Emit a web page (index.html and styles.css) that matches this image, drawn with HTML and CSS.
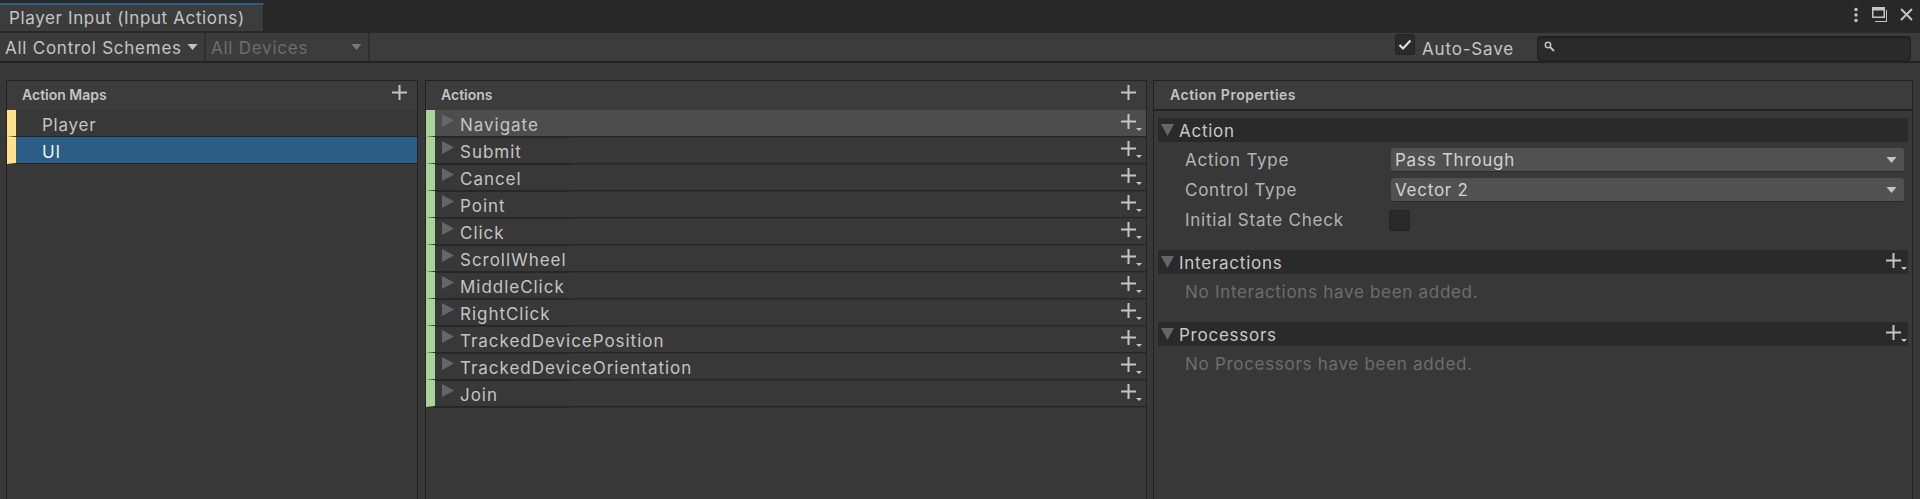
FILE: index.html
```html
<!DOCTYPE html>
<html lang="en">
<head>
<meta charset="utf-8">
<title>Player Input (Input Actions)</title>
<link rel="stylesheet" href="styles.css">
</head>
<body>
<svg class="defs" width="0" height="0">
  <symbol id="plus" viewBox="0 0 15 15"><path d="M6.5 0h2v6.5H15v2H8.500V15h-2V8.500H0v-2h6.500z" fill="#c4c4c4"/></symbol>
  <symbol id="plusmore" viewBox="0 0 22 20"><path d="M6.500 1h2v6.500H15v2H8.500V16h-2V9.500H0v-2h6.500z" fill="#c4c4c4"/><path d="M15 15h6l-3 3z" fill="#c4c4c4"/></symbol>
  <symbol id="right" viewBox="0 0 12 13"><path d="M0 0l12 6.500L0 13z" fill="#666"/></symbol>
  <symbol id="down" viewBox="0 0 13 12"><path d="M0 0h13L6.500 12z" fill="#666"/></symbol>
  <symbol id="drop" viewBox="0 0 10 6"><path d="M0 0h10L5 6z" fill="#c4c4c4"/></symbol>
</svg>
<div class="app">
  <div class="tabbar">
    <div class="tab">Player Input (Input Actions)</div>
    <div class="winbtns">
      <svg width="6" height="16" viewBox="0 0 6 16"><circle cx="3" cy="2.500" r="1.700" fill="#c4c4c4"/><circle cx="3" cy="8" r="1.700" fill="#c4c4c4"/><circle cx="3" cy="13.500" r="1.700" fill="#c4c4c4"/></svg>
      <svg width="15" height="15" viewBox="0 0 15 15"><path d="M0 0h13v11H0zM1.500 3.500v6h10v-6z" fill="#c4c4c4"/><path d="M14 3h1v12H3v-1h11z" fill="#c4c4c4"/></svg>
      <svg width="13" height="13" viewBox="0 0 13 13"><path d="M1 1l11 11M12 1L1 12" stroke="#c4c4c4" stroke-width="2"/></svg>
    </div>
  </div>
  <div class="toolbar">
    <div class="tb-drop tb-schemes"><span class="tb-label">All Control Schemes</span><svg class="tb-arrow" width="11" height="6"><use href="#drop"/></svg></div>
    <div class="tb-drop tb-devices"><span class="tb-label">All Devices</span><svg class="tb-arrow tb-arrow-dim" width="11" height="6"><use href="#drop"/></svg></div>
    <div class="autosave">
      <span class="check"><svg width="14" height="12" viewBox="0 0 14 12"><path d="M1.500 6l3.500 3.500L12.500 1.500" fill="none" stroke="#e0e0e0" stroke-width="2.200"/></svg></span>
      <span class="autosave-label">Auto-Save</span>
    </div>
    <div class="search"><svg width="11" height="11" viewBox="0 0 11 11"><circle cx="4" cy="4" r="2.700" fill="none" stroke="#c4c4c4" stroke-width="1.500"/><path d="M6 6l4 4" stroke="#c4c4c4" stroke-width="1.800"/></svg></div>
  </div>
  <div class="panels">
    <section class="panel maps">
      <header class="phead">Action Maps<svg class="padd" width="15" height="15"><use href="#plus"/></svg></header>
      <div class="maprow">Player</div>
      <div class="maprow selected">UI</div>
    </section>
    <section class="panel actions">
      <header class="phead phead-plain">Actions<svg class="padd" width="15" height="15"><use href="#plus"/></svg></header>
      <div class="actrow hover"><svg class="fold" width="12" height="13"><use href="#right"/></svg><span class="actname">Navigate</span><svg class="more" width="22" height="20"><use href="#plusmore"/></svg></div>
      <div class="actrow"><svg class="fold" width="12" height="13"><use href="#right"/></svg><span class="actname">Submit</span><svg class="more" width="22" height="20"><use href="#plusmore"/></svg></div>
      <div class="actrow"><svg class="fold" width="12" height="13"><use href="#right"/></svg><span class="actname">Cancel</span><svg class="more" width="22" height="20"><use href="#plusmore"/></svg></div>
      <div class="actrow"><svg class="fold" width="12" height="13"><use href="#right"/></svg><span class="actname">Point</span><svg class="more" width="22" height="20"><use href="#plusmore"/></svg></div>
      <div class="actrow"><svg class="fold" width="12" height="13"><use href="#right"/></svg><span class="actname">Click</span><svg class="more" width="22" height="20"><use href="#plusmore"/></svg></div>
      <div class="actrow"><svg class="fold" width="12" height="13"><use href="#right"/></svg><span class="actname">ScrollWheel</span><svg class="more" width="22" height="20"><use href="#plusmore"/></svg></div>
      <div class="actrow"><svg class="fold" width="12" height="13"><use href="#right"/></svg><span class="actname">MiddleClick</span><svg class="more" width="22" height="20"><use href="#plusmore"/></svg></div>
      <div class="actrow"><svg class="fold" width="12" height="13"><use href="#right"/></svg><span class="actname">RightClick</span><svg class="more" width="22" height="20"><use href="#plusmore"/></svg></div>
      <div class="actrow"><svg class="fold" width="12" height="13"><use href="#right"/></svg><span class="actname">TrackedDevicePosition</span><svg class="more" width="22" height="20"><use href="#plusmore"/></svg></div>
      <div class="actrow"><svg class="fold" width="12" height="13"><use href="#right"/></svg><span class="actname">TrackedDeviceOrientation</span><svg class="more" width="22" height="20"><use href="#plusmore"/></svg></div>
      <div class="actrow"><svg class="fold" width="12" height="13"><use href="#right"/></svg><span class="actname">Join</span><svg class="more" width="22" height="20"><use href="#plusmore"/></svg></div>
    </section>
    <section class="panel props">
      <header class="phead phead-line">Action Properties</header>
      <div class="section-head first"><svg class="foldd" width="13" height="12"><use href="#down"/></svg><span class="sec-title">Action</span></div>
      <div class="field"><span class="flabel">Action Type</span><div class="select"><span class="sel-value">Pass Through</span><svg width="11" height="6"><use href="#drop"/></svg></div></div>
      <div class="field"><span class="flabel">Control Type</span><div class="select"><span class="sel-value">Vector 2</span><svg width="11" height="6"><use href="#drop"/></svg></div></div>
      <div class="field"><span class="flabel">Initial State Check</span><span class="box"></span></div>
      <div class="section-head sec-gap"><svg class="foldd" width="13" height="12"><use href="#down"/></svg><span class="sec-title">Interactions</span><svg class="more" width="22" height="20"><use href="#plusmore"/></svg></div>
      <div class="empty">No Interactions have been added.</div>
      <div class="section-head sec-gap"><svg class="foldd" width="13" height="12"><use href="#down"/></svg><span class="sec-title">Processors</span><svg class="more" width="22" height="20"><use href="#plusmore"/></svg></div>
      <div class="empty">No Processors have been added.</div>
    </section>
  </div>
</div>
</body>
</html>
```
FILE: styles.css
```css
* { box-sizing: border-box; }
html, body { margin: 0; padding: 0; height: 100%; overflow: hidden; }
body {
  background: #383838;
  color: #c4c4c4;
  font-family: Inter, "Liberation Sans", sans-serif;
  font-size: 17px;
  font-weight: 400;
  letter-spacing: 0.75px;
}
.defs { position: absolute; }
.app { display: flex; flex-direction: column; height: 499px; }

.tabbar {
  height: 32px;
  background: #282828;
  padding-top: 3px;
  display: flex;
  justify-content: space-between;
  flex: none;
}
.tab {
  width: 264px;
  height: 28px;
  background: #3c3c3c;
  border-top: 2px solid #2c5d87;
  padding: 2px 0 0 9px;
  line-height: 22px;
  letter-spacing: 0.63px;
  border-right: 1px solid #232323;
}
.winbtns {
  display: flex;
  align-items: center;
  gap: 13px;
  padding: 0 7px 6px 0;
}

.toolbar {
  height: 31px;
  background: #3c3c3c;
  border-top: 1px solid #2a2a2a;
  border-bottom: 2px solid #232323;
  display: flex;
  align-items: stretch;
  flex: none;
}
.tb-drop {
  display: flex;
  align-items: center;
  justify-content: space-between;
  padding-left: 5px;
  border-right: 2px solid #2f2f2f;
  line-height: 28px;
}
.tb-label { padding-top: 2px; }
.tb-schemes { width: 206px; padding-right: 6px; }
.tb-devices { width: 164px; color: #6d6d6d; padding-right: 6px; }
.tb-arrow-dim { opacity: 0.45; }
.autosave {
  margin-left: auto;
  display: flex;
  align-items: center;
  gap: 7px;
  width: 142px;
  letter-spacing: 0.83px;
}
.autosave-label { padding-top: 3px; }
.check {
  width: 20px;
  height: 21px;
  margin-top: -5px;
  background: #2a2a2a;
  border: 1px solid #232323;
  border-radius: 3px;
  display: flex;
  align-items: center;
  justify-content: center;
}
.search {
  width: 374px;
  height: 25px;
  margin: 3px 9px 0 0;
  background: #2a2a2a;
  border: 1px solid #212121;
  border-top: 2px solid #1e1e1e;
  border-radius: 4px;
  padding: 3px 0 0 6px;
  display: flex;
  align-items: flex-start;
}

.panels {
  flex: 1;
  display: flex;
  padding: 17px 7px 0 6px;
  align-items: stretch;
}
.panel {
  border: 1px solid #232323;
  border-bottom: none;
  background: #383838;
  display: flex;
  flex-direction: column;
}
.maps { width: 412px; }
.actions { width: 722px; margin-left: 7px; }
.props { width: 760px; margin-left: 6px; }

.phead {
  height: 29px;
  background: #3c3c3c;
  flex: none;
  padding: 0 0 2px 15px;
  display: flex;
  align-items: center;
  justify-content: space-between;
  font-size: 14px;
  font-weight: 600;
  letter-spacing: 0;
  color: #c4c4c4;
}
.padd { margin: -4px 10px 0 0; }
.phead-line { height: 30px; border-bottom: 2px solid #232323; letter-spacing: 0.5px; padding-left: 16px; }

.maprow {
  height: 27px;
  flex: none;
  border-left: 9px solid #ffe28a;
  border-bottom: 1px solid #232323;
  padding: 2px 0 0 26px;
  line-height: 26px;
}
.maprow.selected { background: #2c5d87; color: #f0f0f0; }

.actrow {
  position: relative;
  height: 27px;
  flex: none;
  border-left: 9px solid #a8d49a;
  border-bottom: 1px solid #262626;
  box-shadow: 0 1px 0 #313131;
  padding-left: 7px;
  display: flex;
  align-items: center;
  line-height: 26px;
  letter-spacing: 0.97px;
}
.actname { padding-top: 3px; }
.actrow::after {
  content: "";
  position: absolute;
  left: 0;
  bottom: -2px;
  width: 135px;
  height: 2px;
  background: #272727;
}
.actrow.hover { background: #4d4d4d; }
.fold { margin: -5px 6px 0 0; flex: none; }
.actrow .more, .section-head .more {
  margin-left: auto;
  margin-top: 0;
  flex: none;
}
.actrow .more { margin-right: 3px; }

.section-head {
  height: 24px;
  margin: 0 4px;
  background: #2a2a2a;
  color: #c8c8c8;
  display: flex;
  align-items: center;
  flex: none;
  padding-left: 3px;
  letter-spacing: 0.75px;
}
.sec-title { padding-top: 1px; }
.section-head .more { margin-right: 0; }
.foldd { margin-right: 5px; flex: none; }
.section-head.first { margin-top: 7px; }
.sec-gap { margin-top: 18px; }

.field {
  display: flex;
  align-items: center;
  height: 24px;
  margin-top: 6px;
  padding-left: 31px;
  flex: none;
}
.flabel { width: 206px; flex: none; color: #b4b4b4; }
.select {
  width: 513px;
  height: 24px;
  background: #515151;
  border-radius: 3px;
  border-bottom: 1px solid #2a2a2a;
  color: #d2d2d2;
  padding: 0 7px 0 4px;
  display: flex;
  align-items: center;
  justify-content: space-between;
}
.box {
  width: 21px;
  height: 21px;
  margin-left: -2px;
  background: #2a2a2a;
  border: 1px solid #232323;
  border-radius: 3px;
}
.empty {
  color: #6d6d6d;
  padding-left: 31px;
  height: 24px;
  margin-top: 6px;
  line-height: 24px;
  letter-spacing: 0.7px;
  flex: none;
}
```
